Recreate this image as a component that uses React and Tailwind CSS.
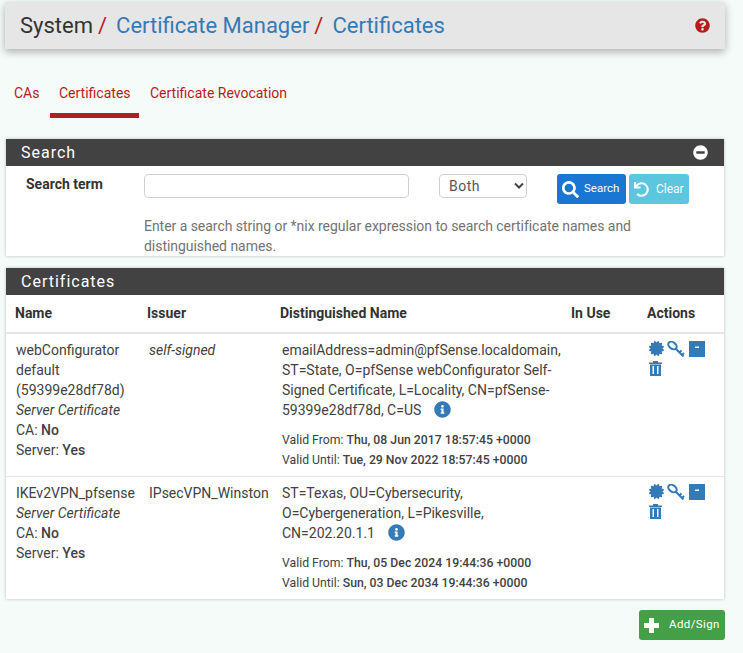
import { FaCertificate, FaInfoCircle, FaQuestionCircle, FaMinusCircle, FaSearch, FaUndo } from 'react-icons/fa';

const KeyIcon = () => (
  <svg viewBox="0 0 18 18" className="w-[18px] h-[18px] ml-[3px] text-[#337ab7]" fill="none" stroke="currentColor" strokeWidth="2">
    <ellipse cx="5.5" cy="4.5" rx="4.6" ry="3.2" transform="rotate(35 5.5 4.5)" />
    <path d="M8.5 7.5l8 8M12.5 11.5l2-2M15 14l2-2" />
  </svg>
);

const ArchiveIcon = () => (
  <svg viewBox="0 0 16 16" className="w-4 h-4 ml-[4px] text-[#337ab7]">
    <path fill="currentColor" fillRule="evenodd" d="M0 0h16v16h-16zM6 5.5v1.5h4v-1.5z" />
  </svg>
);

const TrashIcon = () => (
  <svg viewBox="0 0 13 15" className="w-[13px] h-[15px] text-[#337ab7]">
    <path fill="currentColor" fillRule="evenodd" d="M4 0h5v1.5h4v1.5h-13v-1.5h4zM1 3.5h11v11.5h-11zM3.5 5v8h1.5v-8zM8 5v8h1.5v-8z" />
  </svg>
);

const PlusIcon = () => (
  <svg viewBox="0 0 15 15" className="w-[15px] h-[15px] mr-[10px]">
    <path fill="currentColor" d="M5 0h5v5h5v5h-5v5h-5v-5h-5v-5h5z" />
  </svg>
);

const Actions = () => (
  <div className="flex flex-wrap w-[60px] ml-[2px] gap-y-[2px] items-start">
    <FaCertificate className="w-[15px] h-[15px] text-[#337ab7]" />
    <KeyIcon />
    <ArchiveIcon />
    <TrashIcon />
  </div>
);

const PanelHeading = ({ title, children }) => (
  <div className="bg-[#424242] h-[27px] flex items-center justify-between pl-[15px] pr-4 text-white text-[16px] tracking-[1px]">
    <span className="pt-[1px]">{title}</span>
    {children}
  </div>
);

const Dates = ({ from, until }) => (
  <div className="mt-[10px] text-[12.25px] leading-[20px] text-[#424242]">
    <div>Valid From: <b className="font-medium">{from}</b></div>
    <div>Valid Until: <b className="font-medium">{until}</b></div>
  </div>
);

const Info = () => <FaInfoCircle className="inline-block w-[17px] h-[17px] ml-[13px] -mt-[3px] text-[#337ab7]" />;

const App = () => {
  return (
    <div className="bg-[#f5fbf8] w-[743px] h-[653px] overflow-hidden text-[#424242] text-[14px]" style={{ fontFamily: 'Roboto, sans-serif' }}>
      <div className="pl-[5px] pr-[18px] pt-[2px]">
        <div className="h-[47px] bg-[#e6e6e6] shadow-[0_3px_8px_rgba(0,0,0,0.3)] flex items-center justify-between pl-[15px] pr-[15px] text-[22px]">
          <div className="whitespace-nowrap">
            <span className="text-[#333]">System</span>
            <span className="text-[#b71c1c] ml-[5px]">/</span>
            <span className="text-[#337ab7] ml-[9px]">Certificate Manager</span>
            <span className="text-[#b71c1c] ml-[5px]">/</span>
            <span className="text-[#337ab7] ml-[9px]">Certificates</span>
          </div>
          <FaQuestionCircle className="w-[15px] h-[15px] text-[#b71c1c]" />
        </div>
      </div>

      <div className="flex mt-[26px] h-[43px] text-[14px] text-[#b71c1c]">
        <div className="w-[50px] pl-[14px] pt-[8px]">CAs</div>
        <div className="w-[89px] pl-[9px] pt-[8px] border-b-[5px] border-[#b71c1c]">Certificates</div>
        <div className="pl-[11px] pt-[8px]">Certificate Revocation</div>
      </div>

      <div className="ml-[6px] w-[718px] mt-[21px] bg-white shadow-[0_0_3px_rgba(0,0,0,0.25)]">
        <PanelHeading title="Search">
          <FaMinusCircle className="w-[15px] h-[15px] text-white" />
        </PanelHeading>
        <div className="h-[90px] overflow-hidden">
          <div className="flex items-start pt-[8px]">
            <div className="w-[138px] pl-[20px] font-bold text-[14px] text-[#333] leading-[20px]">Search term</div>
            <input className="w-[265px] h-[24px] border border-[#ccd2d2] rounded-[4px] bg-white" />
            <div className="w-[88px] h-[24px] ml-[30px] border border-[#ccd2d2] rounded-[4px] flex items-center justify-between pl-[9px] pr-[2px] text-[14px] text-[#555] tracking-[0.5px]">
              Both
              <svg viewBox="0 0 10 8" className="w-[10px] h-[8px] text-[#444]"><path d="M1 1.5l4 4 4-4" fill="none" stroke="currentColor" strokeWidth="2" /></svg>
            </div>
            <button className="w-[69px] h-[30px] ml-[30px] bg-[#1976d2] text-white rounded-[3px] flex items-center pl-[5px] text-[11.5px]">
              <FaSearch className="w-[17px] h-[17px] mr-[5px]" />Search
            </button>
            <button className="w-[60px] h-[30px] ml-[3px] bg-[#5bc6de] text-white rounded-[3px] flex items-center pl-[5px] text-[12px]">
              <FaUndo className="w-[15px] h-[15px] mr-[7px]" />Clear
            </button>
          </div>
          <p className="ml-[138px] mt-[12px] w-[510px] text-[#737373] text-[14px] leading-[20px] tracking-[-0.04px]">
            Enter a search string or *nix regular expression to search certificate names and distinguished names.
          </p>
        </div>
      </div>

      <div className="ml-[6px] w-[718px] mt-[12px] bg-white shadow-[0_0_3px_rgba(0,0,0,0.25)]">
        <PanelHeading title="Certificates" />
        <table className="w-full table-fixed border-collapse">
          <thead>
            <tr className="h-[38px] border-b-2 border-[#e6e6e6] text-left text-[14px] text-[#333]">
              <th className="w-[141px] pl-[9px] font-bold">Name</th>
              <th className="w-[133px] font-bold">Issuer</th>
              <th className="w-[291px] font-bold">Distinguished Name</th>
              <th className="w-[76px] font-bold">In Use</th>
              <th className="font-bold">Actions</th>
            </tr>
          </thead>
          <tbody className="text-[14px] leading-[20px] align-top">
            <tr className="h-[143px] border-b border-[#e6e6e6]">
              <td className="pl-[10px] pt-[6px]">
                webConfigurator default (59399e28df78d)<br />
                <i>Server Certificate</i><br />
                CA: <b className="font-medium">No</b><br />
                Server: <b className="font-medium">Yes</b>
              </td>
              <td className="pl-[2px] pt-[6px]"><i>self-signed</i></td>
              <td className="pl-[2px] pt-[6px]">
                <div className="w-[285px]">emailAddress=admin@pfSense.localdomain, ST=State, O=pfSense webConfigurator Self-Signed Certificate, L=Locality, CN=pfSense-59399e28df78d, C=US<Info /></div>
                <Dates from="Thu, 08 Jun 2017 18:57:45 +0000" until="Tue, 29 Nov 2022 18:57:45 +0000" />
              </td>
              <td></td>
              <td className="pt-[7px]"><Actions /></td>
            </tr>
            <tr className="h-[123px]">
              <td className="pl-[10px] pt-[6px]">
                IKEv2VPN_pfsense<br />
                <i>Server Certificate</i><br />
                CA: <b className="font-medium">No</b><br />
                Server: <b className="font-medium">Yes</b>
              </td>
              <td className="pl-[2px] pt-[6px]">IPsecVPN_Winston</td>
              <td className="pl-[2px] pt-[6px]">
                <div className="w-[285px]">ST=Texas, OU=Cybersecurity, O=Cybergeneration, L=Pikesville, CN=202.20.1.1<Info /></div>
                <Dates from="Thu, 05 Dec 2024 19:44:36 +0000" until="Sun, 03 Dec 2034 19:44:36 +0000" />
              </td>
              <td></td>
              <td className="pt-[7px]"><Actions /></td>
            </tr>
          </tbody>
        </table>
      </div>

      <div className="flex justify-end pr-[18px] mt-[11px]">
        <button className="w-[86px] h-[30px] bg-[#43a047] text-white rounded-[3px] flex items-center pl-[5px] text-[11.5px] tracking-[0.4px]">
          <PlusIcon />Add/Sign
        </button>
      </div>
    </div>
  );
};

export default App;
